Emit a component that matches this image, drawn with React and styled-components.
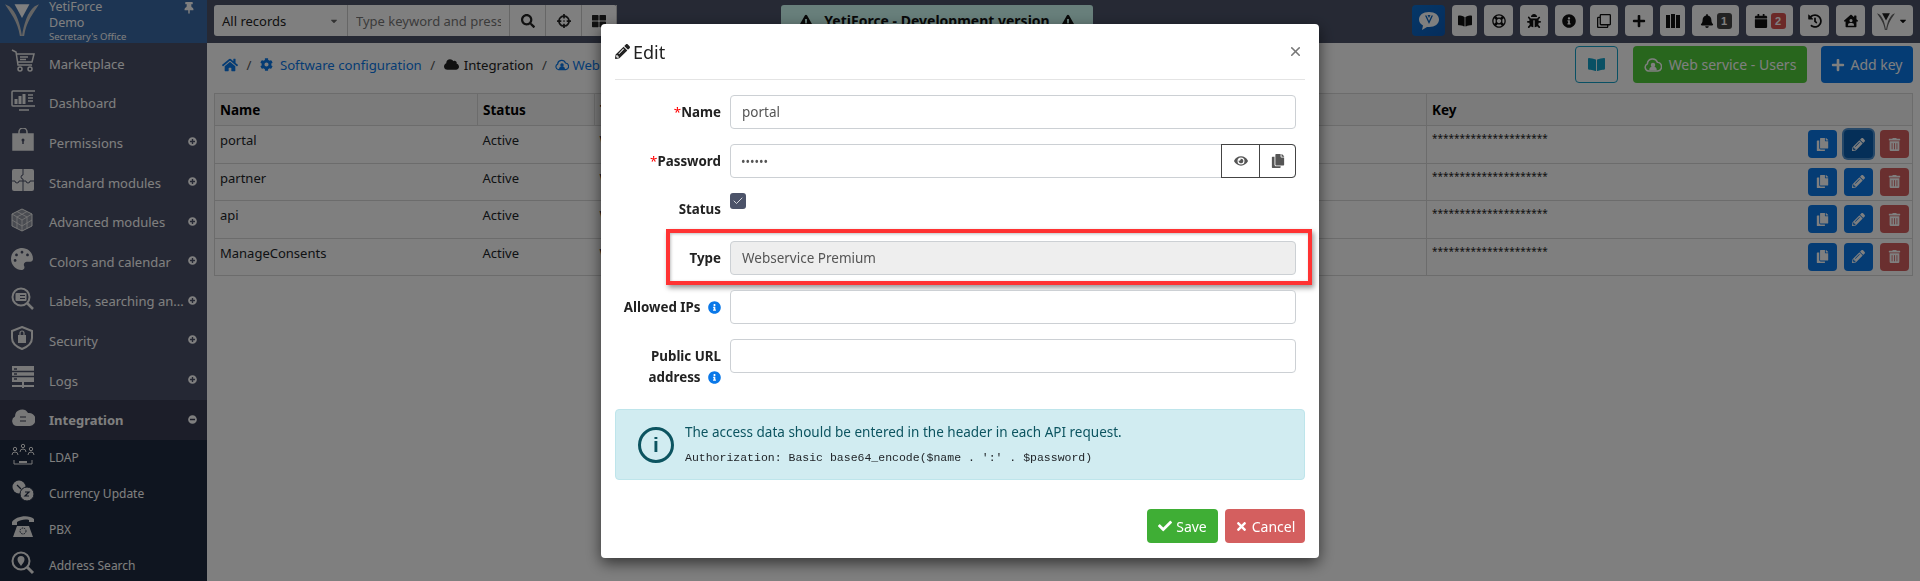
import React from 'react'
import styled, { createGlobalStyle } from 'styled-components'
import {
  FaHome, FaCog, FaCloud, FaPencilAlt, FaEye, FaCopy, FaSearch, FaCheck, FaTimes,
  FaCrosshairs, FaThLarge, FaBookOpen, FaRegLifeRing, FaBug, FaInfoCircle, FaPlus, FaBell, FaCalendar,
  FaHistory, FaTrashAlt, FaThumbtack, FaPlusCircle, FaMinusCircle, FaExclamationTriangle,
  FaPalette, FaRegClone, FaCaretDown, FaHouseUser
} from 'react-icons/fa'
import { X, Check as CheckMark } from 'lucide-react'

const GlobalStyle = createGlobalStyle`
  html, body { margin: 0; height: 100%; overflow: hidden; }
  body { font-family: "Noto Sans", "Liberation Sans", sans-serif; font-size: 13px; color: #212529; background: #fff; }
  * { box-sizing: border-box; }
`

const Page = styled.div`
  display: grid;
  grid-template-columns: 207px 1fr;
  height: 581px;
  overflow: hidden;
`

const Sidebar = styled.aside`
  background: #4b5168;
  overflow: hidden;
  display: flex;
  flex-direction: column;
`

const Brand = styled.div`
  height: 43px;
  flex: none;
  background: #3a6aa6;
  color: #fff;
  display: flex;
  position: relative;
  padding: 2px 0 0 5px;
  margin-bottom: 1px;
`

const BrandText = styled.div`
  margin: -2px 0 0 10px;
  font-size: 12.5px;
  line-height: 13px;
  span { display: block; margin-top: 3px; }
  small { display: block; margin-top: 1px; font-size: 9.5px; line-height: 13px; }
`

const Pin = styled.span`
  position: absolute;
  right: 12px;
  top: 1px;
  font-size: 12px;
`

const MenuItem = styled.div`
  height: ${p => (p.$child ? '36px' : '39.6px')};
  flex: none;
  display: flex;
  align-items: center;
  color: #fff;
  font-size: ${p => (p.$child ? '12px' : '13px')};
  font-weight: ${p => (p.$active ? 700 : 400)};
  background: ${p => (p.$child ? '#1e2a40' : p.$active ? '#383d52' : 'transparent')};
  padding: 0 10px 0 11px;
`

const MenuIcon = styled.span`
  width: 38px;
  font-size: 22px;
  display: flex;
  margin-top: -5px;
  color: #f0f0f0;
`

const MenuLabel = styled.span`
  flex: 1;
  white-space: nowrap;
`

const Toggle = styled.span`
  font-size: 9px;
  display: flex;
  margin-top: -2px;
`

const Main = styled.div`
  min-width: 0;
  background: #fff;
`

const TopBar = styled.header`
  height: 43px;
  background: #4c5369;
  padding: 5px 7px 0;
  display: flex;
  position: relative;
`

const SearchGroup = styled.div`
  display: flex;
  height: 31px;
  background: #fff;
  border-radius: 3px;
`

const SearchCell = styled.div`
  width: ${p => p.$w}px;
  border-right: 1px solid #ccc;
  display: flex;
  align-items: center;
  justify-content: ${p => (p.$center ? 'center' : 'space-between')};
  padding: 0 ${p => (p.$center ? 0 : 8)}px;
  color: #222;
  font-size: ${p => (p.$center ? '14px' : '13px')};
  white-space: nowrap;
`

const SearchInput = styled.input`
  width: 162px;
  border: 0;
  border-right: 1px solid #ccc;
  background: transparent;
  padding: 0 8px;
  font-family: inherit;
  font-size: 13px;
  &::placeholder { color: #777; opacity: 1; }
`

const DevBanner = styled.div`
  position: absolute;
  left: 574px;
  top: 5px;
  width: 312px;
  height: 31px;
  background: #d0fff7;
  border-radius: 3px;
  display: flex;
  align-items: center;
  justify-content: space-around;
  padding: 0 12px;
  font-weight: 700;
  font-size: 14px;
  color: #111;
`

const Tools = styled.div`
  margin-left: auto;
  display: flex;
  gap: 7px;
`

const Tool = styled.button`
  width: ${p => p.$w}px;
  height: 31px;
  border: 0;
  border-radius: 4px;
  background: ${p => (p.$blue ? 'linear-gradient(135deg, #0a6fd0, #0a5ab8)' : '#fff')};
  color: ${p => (p.$blue ? '#fff' : '#111')};
  font-size: 14px;
  display: flex;
  align-items: center;
  justify-content: center;
  gap: 3px;
  padding: 0;
  position: relative;
`

const Badge = styled.span`
  background: ${p => p.$bg};
  color: #fff;
  font-size: 11px;
  font-weight: 700;
  border-radius: 3px;
  width: 15px;
  height: 16px;
  display: flex;
  align-items: center;
  justify-content: center;
`

const Content = styled.main`
  padding: 3px 7px 0;
`

const ActionBar = styled.div`
  height: 47px;
  display: flex;
  align-items: flex-start;
`

const Crumbs = styled.nav`
  flex: 1;
  min-width: 0;
  overflow: hidden;
  display: flex;
  align-items: center;
  height: 37px;
  padding-left: 8px;
  gap: 7px;
  font-size: 13.2px;
  color: #0a78e8;
  white-space: nowrap;
  i { color: #555; font-style: normal; margin: 0 1.5px; }
  b { font-weight: 400; color: #222; }
  svg { flex: none; }
`

const CrumbText = styled.span`
  display: flex;
  align-items: center;
  gap: ${p => p.$gap}px;
`

const HeadButton = styled.button`
  height: 37px;
  flex: none;
  width: ${p => p.$w}px;
  margin-left: ${p => p.$gap}px;
  border-radius: 4px;
  border: ${p => (p.$outline ? '1px solid #12a1c9' : '0')};
  background: ${p => (p.$outline ? 'transparent' : p.$bg)};
  color: ${p => (p.$outline ? '#12a1c9' : '#fff')};
  font-family: inherit;
  font-size: 14px;
  display: flex;
  align-items: center;
  justify-content: center;
  gap: ${p => p.$inner ?? 7}px;
  padding: 0;
`

const Table = styled.table`
  width: 100%;
  table-layout: fixed;
  border-collapse: collapse;
  border: 1px solid #d8d8d8;
  font-size: 13px;
  th { text-align: left; height: 32px; background: #f6f6f6; font-weight: 700; font-size: 13.5px; color: #000; }
  th, td { border-top: 1px solid #d8d8d8; padding: 0 5px; }
  th + th { border-left: 1px solid #d8d8d8; }
  td { height: 37.5px; vertical-align: top; padding-top: 5px; }
  td.line { border-left: 1px solid #d8d8d8; padding-right: 3px; }
`

const KeyStars = styled.span`
  flex: 1;
  font-size: 10px;
  line-height: 14px;
  color: #222;
  padding-top: 1px;
`

const KeyLine = styled.div`
  display: flex;
  margin-top: -1px;
`

const Actions = styled.div`
  display: flex;
  justify-content: flex-end;
  gap: 7px;
`

const RowButton = styled.span`
  width: 29px;
  height: 28px;
  border-radius: 4px;
  background: ${p => p.$bg};
  color: #fff;
  font-size: 13px;
  display: flex;
  align-items: center;
  justify-content: center;
  box-shadow: ${p => (p.$focus ? '0 0 0 2px #4d90d0' : 'none')};
`

const Backdrop = styled.div`
  position: fixed;
  inset: 0;
  background: rgba(0, 0, 0, .5);
  display: flex;
  justify-content: center;
  align-items: flex-start;
  padding: 24px 0 0 0;
`

const Modal = styled.div`
  width: 718px;
  height: 534px;
  background: #fff;
  border-radius: 4px;
  box-shadow: 0 5px 15px rgba(0, 0, 0, .6);
  padding: 0 14px;
  color: #212529;
`

const ModalHead = styled.div`
  height: 56px;
  border-bottom: 1px solid #e4e4e4;
  display: flex;
  align-items: center;
  gap: 3px;
  font-size: 18px;
  color: #222;
  margin-bottom: 15px;
`

const Close = styled.span`
  margin-left: auto;
  margin-right: 2px;
  color: #777;
  display: flex;
`

const FormRow = styled.div`
  display: grid;
  grid-template-columns: 106px 566px;
  column-gap: 9px;
  align-items: ${p => (p.$top ? 'start' : 'center')};
  height: ${p => p.$h || 34}px;
  margin-bottom: ${p => p.$mb ?? 15}px;
  position: relative;
`

const Label = styled.label`
  text-align: right;
  font-weight: 700;
  font-size: 13.35px;
  line-height: 21px;
  color: #222;
  padding-top: ${p => p.$pt || 0}px;
  em { color: #f00; font-style: normal; font-weight: 400; }
  svg { color: #0a78e8; font-size: 13px; vertical-align: -2px; margin-left: 4px; }
`

const Field = styled.input`
  height: 34px;
  width: 100%;
  border: 1px solid #ccd0d4;
  border-radius: 4px;
  background: ${p => (p.disabled ? '#eee' : '#fff')};
  color: #555;
  font-family: inherit;
  font-size: 13.5px;
  padding: 0 11px;
`

const PasswordGroup = styled.div`
  height: 34px;
  border: 1px solid #ccd0d4;
  border-radius: 4px;
  display: flex;
`

const PasswordInput = styled.input`
  flex: 1;
  min-width: 0;
  border: 0;
  background: transparent;
  color: #555;
  font-family: inherit;
  font-size: 12px;
  padding: 0 10px;
`

const FieldButton = styled.span`
  width: ${p => p.$w}px;
  margin: -1px ${p => (p.$last ? -1 : 0)}px -1px ${p => (p.$last ? -1 : 0)}px;
  border: 1px solid #444;
  border-radius: ${p => (p.$last ? '0 4px 4px 0' : 0)};
  display: flex;
  align-items: center;
  justify-content: center;
  color: #555;
  font-size: 14px;
`

const Check = styled.span`
  width: 16px;
  height: 16px;
  margin-top: -18px;
  border-radius: 3px;
  background: #4c5369;
  color: #fff;
  display: flex;
  align-items: center;
  justify-content: center;
`

const Highlight = styled.div`
  position: absolute;
  left: 51px;
  top: -12px;
  width: 646px;
  height: 56px;
  border: 4px solid #f33;
  box-shadow: 2px 3px 5px rgba(0, 0, 0, .4), inset 1px 1px 3px rgba(0, 0, 0, .25);
  pointer-events: none;
`

const Notice = styled.div`
  height: 71px;
  margin-top: 14px;
  background: #d1ecf1;
  border: 1px solid #bee5eb;
  border-radius: 4px;
  color: #0c5460;
  display: flex;
  align-items: center;
  padding-left: 22px;
  gap: 11px;
`

const NoticeIcon = styled.span`
  width: 36px;
  height: 36px;
  border: 3px solid #0c5460;
  border-radius: 50%;
  font-size: 21px;
  font-weight: 700;
  font-family: "Liberation Sans", sans-serif;
  display: flex;
  align-items: center;
  justify-content: center;
  flex: none;
`

const NoticeText = styled.div`
  font-size: 13.5px;
  line-height: 18px;
  code { display: block; margin-top: 8px; color: #212529; font-family: "Liberation Mono", monospace; font-size: 11.5px; }
`

const Footer = styled.div`
  display: flex;
  justify-content: flex-end;
  gap: 7px;
  margin-top: 29px;
`

const FooterButton = styled.button`
  height: 34px;
  width: ${p => p.$w}px;
  border: 0;
  border-radius: 4px;
  background: ${p => p.$bg};
  color: #fff;
  font-family: inherit;
  font-size: 14px;
  display: flex;
  align-items: center;
  justify-content: center;
  gap: 4px;
  padding: 0;
`

// sidebar pictograms, the package icons don't come close to these
const Glyph = ({ children }) => (
  <svg width="24" height="24" viewBox="0 0 24 24" fill="none" stroke="currentColor" strokeWidth="1.5">{children}</svg>
)

const CartIcon = () => (
  <Glyph>
    <path d="M1 1 L5 3 L7 16 H21 M5.5 5 H23 L21 13 H7" />
    <path d="M9 8 H17 M9 10.5 H15" />
    <circle cx="9" cy="20" r="2" />
    <circle cx="19" cy="20" r="2" />
  </Glyph>
)

const MonitorIcon = () => (
  <Glyph>
    <rect x="1" y="2" width="24" height="15" rx="1" />
    <path d="M8 21 H18" />
    <path d="M5 15 V10 M9 15 V7 M13 15 V5" strokeWidth="3" />
    <path d="M17 6 H22 M17 9 H22 M17 12 H22" />
  </Glyph>
)

const BagIcon = () => (
  <Glyph>
    <path d="M8 6 V4 A3 3 0 0 1 16 4 V6" />
    <path d="M2 6 H22 V22 H2 Z" fill="currentColor" />
    <circle cx="12" cy="12" r="1.5" fill="#4b5168" stroke="none" />
    <path d="M12 12 V16" stroke="#4b5168" strokeWidth="1.5" />
  </Glyph>
)

const PuzzleIcon = () => (
  <Glyph>
    <rect x="1" y="1" width="22" height="22" rx="2" fill="currentColor" stroke="none" />
    <path d="M12 1 V7 A2 2 0 0 0 12 11 V13 H8 A2 2 0 0 1 4 13 H1 M12 13 H15 A2 2 0 0 0 19 13 H23 M12 13 V23" stroke="#4b5168" strokeWidth="1" />
  </Glyph>
)

const LatticeIcon = () => (
  <Glyph>
    <path d="M11 1 L21 6 V18 L11 23 L1 18 V6 Z" strokeWidth="1" fill="currentColor" fillOpacity=".45" />
    <path d="M11 12 V23 M11 12 L1 6 M11 12 L21 6 M6 3.5 L16 9 M16 3.5 L6 9 M6 9 V20.5 M16 9 V20.5 M1 12 L11 18 L21 12" strokeWidth=".8" />
  </Glyph>
)

const SearchCardIcon = () => (
  <Glyph>
    <circle cx="10" cy="10" r="8.5" strokeWidth="2" />
    <path d="M16 16 L22 22" strokeWidth="2.5" />
    <rect x="4.5" y="6" width="11" height="8" rx="1" fill="currentColor" stroke="none" />
    <path d="M9 8.5 H14 M9 11.5 H14" stroke="#4b5168" strokeWidth="1" />
  </Glyph>
)

const ShieldIcon = () => (
  <Glyph>
    <path d="M11 1 L21 5 V12 C21 17 16 21 11 23 C6 21 1 17 1 12 V5 Z" strokeWidth="2" />
    <rect x="7" y="9" width="8" height="8" fill="currentColor" stroke="none" />
    <path d="M9 9 V7 A2 2 0 0 1 13 7 V9" strokeWidth="1.2" />
  </Glyph>
)

const RackIcon = () => (
  <Glyph>
    <rect x="1" y="0" width="22" height="16" fill="currentColor" stroke="none" />
    <path d="M1 5.5 H23 M1 10.5 H23" stroke="#4b5168" />
    <path d="M3 3 H6 M3 8 H6 M3 13 H6" stroke="#4b5168" />
    <path d="M1 20 H23 M12 16 V22" strokeWidth="2" />
  </Glyph>
)

const CloudArrowsIcon = () => (
  <Glyph>
    <path d="M6 20 A5 5 0 0 1 4 10.5 A7 7 0 0 1 17 7 A6.5 6.5 0 0 1 19 20 Z" fill="currentColor" stroke="none" />
    <path d="M9 11 H15 M9 15 H15" stroke="#383d52" strokeWidth="1" />
  </Glyph>
)

const PeopleIcon = () => (
  <Glyph>
    <g strokeWidth="1">
      <circle cx="12" cy="3" r="1.7" />
      <path d="M9 9 A3 3 0 0 1 15 9" />
      <circle cx="4" cy="6" r="1.7" />
      <path d="M1 12 A3 3 0 0 1 7 12" />
      <circle cx="20" cy="6" r="1.7" />
      <path d="M17 12 A3 3 0 0 1 23 12" />
      <path d="M3 17 V21 H21 V17" />
    </g>
    <path d="M8 19 H16" strokeWidth="2" />
  </Glyph>
)

const CoinsIcon = () => (
  <Glyph>
    <circle cx="8" cy="8" r="6.5" fill="currentColor" stroke="none" />
    <circle cx="16" cy="15" r="7" fill="currentColor" stroke="#1e2a40" strokeWidth="1" />
    <path d="M6 6 L10 10 M14 13 H18 L14 17 H18" stroke="#1e2a40" strokeWidth="1.2" />
  </Glyph>
)

const PhoneIcon = () => (
  <Glyph>
    <path d="M1 7 C4 1 18 -1 23 4 V7 H18 V5 C14 4 9 5 6 7 V10 H1 Z" fill="currentColor" stroke="none" />
    <path d="M6 11 H18 L22 22 H2 Z" fill="currentColor" stroke="none" />
    <circle cx="12" cy="16" r="3" stroke="#1e2a40" strokeWidth="1" strokeDasharray="1.5 1" />
  </Glyph>
)

const PinSearchIcon = () => (
  <Glyph>
    <circle cx="10" cy="10" r="8.5" strokeWidth="2" />
    <path d="M16 16 L22 22" strokeWidth="3" />
    <path d="M10 15 C8 12 6.5 10.5 6.5 8.5 A3.5 3.5 0 0 1 13.5 8.5 C13.5 10.5 12 12 10 15 Z" fill="currentColor" stroke="none" />
  </Glyph>
)

const OutlineCloud = ({ size = 18 }) => (
  <svg width={size} height={size} viewBox="0 0 24 24" fill="none" stroke="currentColor" strokeWidth="2">
    <path d="M6 20 A5 5 0 0 1 4.5 10.5 A7 7 0 0 1 18 8.5 A5.8 5.8 0 0 1 18.5 20 Z" />
    <circle cx="12" cy="12" r="2" fill="currentColor" />
    <path d="M8 19 A4 4 0 0 1 16 19" fill="currentColor" />
  </svg>
)

const Books = () => (
  <svg width="14" height="14" viewBox="0 0 14 14" fill="currentColor">
    <rect x="0" y="1" width="4" height="13" />
    <rect x="5" y="0" width="4" height="14" />
    <rect x="10" y="1" width="4" height="13" />
  </svg>
)

const ChatLogo = () => (
  <svg width="20" height="18" viewBox="0 0 20 18">
    <path d="M10 0 C16 0 20 3 20 7.5 C20 12 16 15 10 15 L8 15 L3 18 L4 13.5 C1.500 12 0 10 0 7.500 C0 3 4 0 10 0 Z" fill="#fff" />
    <path d="M6 3.500 L10 12 L14 3.500 L12.500 3.500 L10 9 L7.500 3.500 Z" fill="#0a64c0" />
    <path d="M8.500 3 H11.500 L10 6 Z" fill="#0a64c0" />
  </svg>
)

const menu = [
  ['Marketplace', CartIcon],
  ['Dashboard', MonitorIcon],
  ['Permissions', BagIcon, 'plus'],
  ['Standard modules', PuzzleIcon, 'plus'],
  ['Advanced modules', LatticeIcon, 'plus'],
  ['Colors and calendar', FaPalette, 'plus'],
  ['Labels, searching an...', SearchCardIcon, 'plus'],
  ['Security', ShieldIcon, 'plus'],
  ['Logs', RackIcon, 'plus'],
  ['Integration', CloudArrowsIcon, 'minus'],
]

const children = [
  ['LDAP', PeopleIcon],
  ['Currency Update', CoinsIcon],
  ['PBX', PhoneIcon],
  ['Address Search', PinSearchIcon],
]

const services = ['portal', 'partner', 'api', 'ManageConsents']

const Logo = ({ size = 32, color = '#c8c8c8', top = '#fff' }) => (
  <svg width={size} height={size} viewBox="0 0 32 32" style={{ flex: 'none' }}>
    <path d="M0 2 C5 10 12 18 14 32 L16 32 C14 20 11 10 4 4 Z M32 2 C27 10 20 18 18 32 L16 32 C18 20 21 10 28 4 Z" fill={color} />
    <path d="M9 2 H23 L16 15 Z" fill={top} />
  </svg>
)

function KeyRow({ focus }) {
  return (
    <KeyLine>
      <KeyStars>*********************</KeyStars>
      <Actions>
        <RowButton $bg="#0a78e8"><FaCopy /></RowButton>
        <RowButton $bg={focus ? '#0a5fb0' : '#0a78e8'} $focus={focus}><FaPencilAlt /></RowButton>
        <RowButton $bg="#d45f5f"><FaTrashAlt /></RowButton>
      </Actions>
    </KeyLine>
  )
}

export default function App() {
  return (
    <>
      <GlobalStyle />
      <Page>
        <Sidebar>
          <Brand>
            <Logo size={34} />
            <BrandText>
              YetiForce<span>Demo</span><small>Secretary's Office</small>
            </BrandText>
            <Pin><FaThumbtack /></Pin>
          </Brand>
          {menu.map(([label, Icon, toggle]) => (
            <MenuItem key={label} $active={label === 'Integration'}>
              <MenuIcon><Icon /></MenuIcon>
              <MenuLabel>{label}</MenuLabel>
              {toggle && <Toggle>{toggle === 'plus' ? <FaPlusCircle /> : <FaMinusCircle />}</Toggle>}
            </MenuItem>
          ))}
          {children.map(([label, Icon]) => (
            <MenuItem key={label} $child>
              <MenuIcon><Icon /></MenuIcon>
              <MenuLabel>{label}</MenuLabel>
            </MenuItem>
          ))}
        </Sidebar>
        <Main>
          <TopBar>
            <SearchGroup>
              <SearchCell $w={134}>All records <FaCaretDown size={10} color="#666" /></SearchCell>
              <SearchInput placeholder="Type keyword and press enter" />
              <SearchCell $w={36} $center><FaSearch /></SearchCell>
              <SearchCell $w={36} $center><FaCrosshairs /></SearchCell>
              <SearchCell $w={35} $center><FaThLarge /></SearchCell>
            </SearchGroup>
            <DevBanner>
              <FaExclamationTriangle />YetiForce - Development version<FaExclamationTriangle />
            </DevBanner>
            <Tools>
              <Tool $w={33} $blue><ChatLogo /></Tool>
              <Tool $w={25}><FaBookOpen /></Tool>
              <Tool $w={29}><FaRegLifeRing /></Tool>
              <Tool $w={28}><FaBug /></Tool>
              <Tool $w={28}><FaInfoCircle /></Tool>
              <Tool $w={28}><FaRegClone /></Tool>
              <Tool $w={28}><FaPlus /></Tool>
              <Tool $w={25}><Books /></Tool>
              <Tool $w={47}><FaBell /><Badge $bg="#444">1</Badge></Tool>
              <Tool $w={47}><FaCalendar /><Badge $bg="#d9534f">2</Badge></Tool>
              <Tool $w={29}><FaHistory /></Tool>
              <Tool $w={29}><FaHouseUser /></Tool>
              <Tool $w={41}><Logo size={18} color="#666" top="#222" /><FaCaretDown size={10} /></Tool>
            </Tools>
          </TopBar>
          <Content>
            <ActionBar>
              <Crumbs>
                <FaHome size={16} /><i>/</i>
                <FaCog size={13} /><span>Software configuration</span><i>/</i>
                <b><CrumbText $gap={5}><FaCloud size={15} color="#222" />Integration</CrumbText></b><i>/</i>
                <CrumbText $gap={3}><OutlineCloud size={14} />Web service - Applications</CrumbText>
              </Crumbs>
              <HeadButton $outline $w={43}><FaBookOpen size={17} /></HeadButton>
              <HeadButton $w={174} $gap={15} $bg="#50cc3a"><OutlineCloud />Web service - Users</HeadButton>
              <HeadButton $w={92} $gap={14} $inner={5} $bg="#0a78e8"><FaPlus size={14} />Add key</HeadButton>
            </ActionBar>
            <Table>
              <colgroup>
                <col style={{ width: 263 }} />
                <col style={{ width: 117 }} />
                <col style={{ width: 832 }} />
                <col />
              </colgroup>
              <thead>
                <tr><th>Name</th><th>Status</th><th>Type</th><th>Key</th></tr>
              </thead>
              <tbody>
                {services.map((name, i) => (
                  <tr key={name}>
                    <td>{name}</td>
                    <td>Active</td>
                    <td>Webservice Premium</td>
                    <td className="line">
                      <KeyRow focus={i === 0} />
                    </td>
                  </tr>
                ))}
              </tbody>
            </Table>
          </Content>
        </Main>
      </Page>
      <Backdrop>
        <Modal>
          <ModalHead>
            <FaPencilAlt size={15} />Edit
            <Close><X size={15} strokeWidth={2.5} /></Close>
          </ModalHead>
          <FormRow>
            <Label><em>*</em>Name</Label>
            <Field readOnly value="portal" />
          </FormRow>
          <FormRow>
            <Label><em>*</em>Password</Label>
            <PasswordGroup>
              <PasswordInput type="password" readOnly value="secret" />
              <FieldButton $w={39}><FaEye /></FieldButton>
              <FieldButton $w={37} $last><FaCopy /></FieldButton>
            </PasswordGroup>
          </FormRow>
          <FormRow $h={33}>
            <Label>Status</Label>
            <Check><CheckMark size={12} strokeWidth={1.5} /></Check>
          </FormRow>
          <FormRow>
            <Label>Type</Label>
            <Field disabled value="Webservice Premium" />
            <Highlight />
          </FormRow>
          <FormRow>
            <Label>Allowed IPs <FaInfoCircle /></Label>
            <Field readOnly />
          </FormRow>
          <FormRow $top $h={56} $mb={0}>
            <Label $pt={7}>Public URL address <FaInfoCircle /></Label>
            <Field readOnly />
          </FormRow>
          <Notice>
            <NoticeIcon>i</NoticeIcon>
            <NoticeText>
              The access data should be entered in the header in each API request.
              <code>Authorization: Basic base64_encode($name . ':' . $password)</code>
            </NoticeText>
          </Notice>
          <Footer>
            <FooterButton $w={71} $bg="#3fae35"><FaCheck size={14} />Save</FooterButton>
            <FooterButton $w={80} $bg="#d45f5f"><FaTimes size={13} />Cancel</FooterButton>
          </Footer>
        </Modal>
      </Backdrop>
    </>
  )
}
